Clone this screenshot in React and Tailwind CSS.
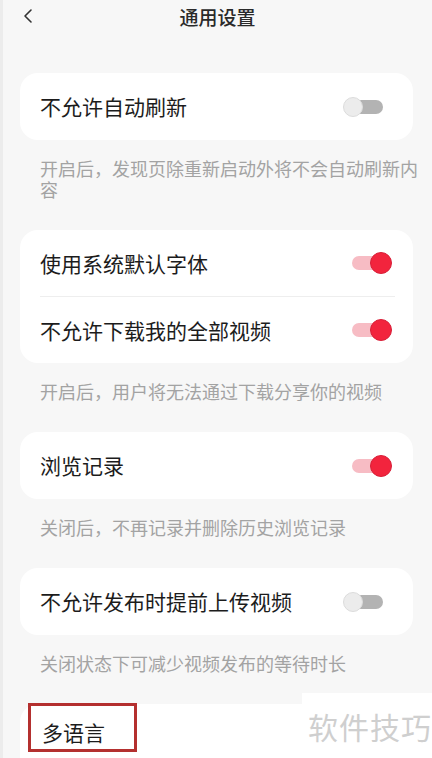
import React from 'react';

const FONT = { fontFamily: '"Noto Sans CJK SC", "Noto Sans", sans-serif' };

function Toggle({ on }) {
  if (on) {
    return (
      <div className="relative mr-[21px] h-[22px] w-[40px] shrink-0">
        <div className="absolute left-0 top-[4px] h-[14px] w-[34px] rounded-full bg-[#f7bcc4]" />
        <div className="absolute right-0 top-0 h-[22px] w-[22px] rounded-full border border-[#d81f38] bg-[#f2243d]" />
      </div>
    );
  }
  return (
    <div className="relative mr-[30px] h-[22px] w-[40px] shrink-0">
      <div className="absolute right-0 top-[4px] h-[14px] w-[34px] rounded-full bg-[#b3b3b3]" />
      <div className="absolute left-0 top-px h-[20px] w-[20px] rounded-full border border-[#dcdcdc] bg-[#ececec]" />
    </div>
  );
}

function Row({ label, on, h = 'h-[67px]' }) {
  return (
    <div className={`flex ${h} items-center justify-between pl-[20px]`}>
      <span className="text-[21px] leading-none text-[#1c1c1c]">{label}</span>
      <Toggle on={on} />
    </div>
  );
}

function Note({ children }) {
  return (
    <p className="pb-[30px] pl-[37px] pr-[8px] pt-[18px] text-[18px] leading-[21px] text-[#a3a3a3]">
      {children}
    </p>
  );
}

function Card({ children, className = 'rounded-[18px]' }) {
  return (
    <div className="pl-[17px] pr-[19px]">
      <div className={`bg-white ${className}`}>{children}</div>
    </div>
  );
}

export default function App() {
  return (
    <div className="relative h-[758px] w-[432px] overflow-hidden border-l-[3px] border-[#ececec] bg-[#f7f7f7]" style={FONT}>
      {/* header */}
      <div className="relative flex h-[32px] items-center justify-center">
        <svg className="absolute left-[18px] top-[8px]" width="16" height="16" viewBox="0 0 16 16" fill="none">
          <path d="M10 2 L4 8 L10 14" stroke="#333" strokeWidth="1.6" strokeLinecap="round" strokeLinejoin="round" />
        </svg>
        <span className="text-[19px] font-medium leading-none text-[#2a2a2a]">通用设置</span>
      </div>

      <div className="pt-[41px]">
        <Card>
          <Row label="不允许自动刷新" on={false} />
        </Card>
      </div>
      <Note>开启后，发现页除重新启动外将不会自动刷新内容</Note>

      <Card>
        <Row label="使用系统默认字体" on h="h-[66px]" />
        <div className="ml-[20px] mr-[18px] h-px bg-[#eeeeee]" />
        <Row label="不允许下载我的全部视频" on h="h-[66px]" />
      </Card>
      <Note>开启后，用户将无法通过下载分享你的视频</Note>

      <Card>
        <Row label="浏览记录" on />
      </Card>
      <Note>关闭后，不再记录并删除历史浏览记录</Note>

      <Card>
        <Row label="不允许发布时提前上传视频" on={false} />
      </Card>
      <Note>关闭状态下可减少视频发布的等待时长</Note>

      <Card className="rounded-t-[18px]">
        <div className="flex h-[67px] items-start pl-[22px] pt-[16px]">
          <span className="text-[21px] leading-[24px] text-[#1c1c1c]">多语言</span>
        </div>
      </Card>

      {/* highlight box */}
      <div className="absolute left-[25px] top-[703px] h-[49px] w-[109px] border-[3px] border-[#b4302f]" />

      {/* watermark */}
      <div className="absolute left-[299px] top-[693px] flex h-[65px] w-[133px] items-center bg-white pl-[6px]">
        <span className="text-[30px] leading-none tracking-[1px] text-[#cfcfcf]">软件技巧</span>
      </div>
    </div>
  );
}
